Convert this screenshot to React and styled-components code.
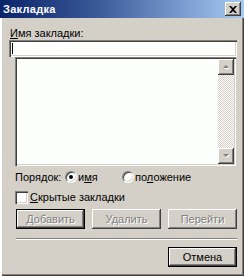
import React from "react";
import styled, { createGlobalStyle, css } from "styled-components";

const Global = createGlobalStyle`
  html, body { margin: 0; padding: 0; background: #d4d0c8; }
  body { font-family: "Liberation Sans", Arial, sans-serif; font-size: 11px; }
  * { box-sizing: border-box; }
`;

const Window = styled.div`
  width: 244px;
  height: 276px;
  display: flex;
  flex-direction: column;
  background: #d4d0c8;
  color: #000;
`;

const TitleBar = styled.div`
  height: 18px;
  flex: none;
  display: flex;
  align-items: center;
  justify-content: space-between;
  padding: 0 3px 0 3px;
  background: linear-gradient(90deg, #0a246a 0%, #3a5a98 40%, #7b9cd0 75%, #a6caf0 100%);
`;

const Title = styled.span`
  color: #fff;
  font-weight: bold;
  font-size: 11px;
  letter-spacing: 0.3px;
`;

const CloseBtn = styled.div`
  width: 16px;
  height: 14px;
  background: #d4d0c8;
  display: flex;
  align-items: center;
  justify-content: center;
  box-shadow: inset -1px -1px #404040, inset 1px 1px #fff, inset -2px -2px #808080;
`;

const Body = styled.div`
  flex: 1;
  display: flex;
  flex-direction: column;
  padding: 8px 7px 0 9px;
  box-shadow: inset 2px 0 #fff, inset -1px -1px #404040, inset -2px -2px #808080;
`;

const Label = styled.div`
  line-height: 14px;
  height: 14px;
  padding-left: ${(p) => p.$indent || 0}px;
`;

const U = styled.span`
  text-decoration: underline;
`;

const sunken = css`
  background: #fdfffc;
  box-shadow: inset 1px 1px #808080, inset 2px 2px #404040, inset -1px -1px #fff, inset -2px -2px #d4d0c8;
`;

const TextInput = styled.div`
  ${sunken};
  height: 17px;
  position: relative;
  &::after {
    content: "";
    position: absolute;
    left: 3px;
    top: 3px;
    width: 1px;
    height: 11px;
    background: #000;
  }
`;

const ListBox = styled.div`
  ${sunken};
  height: 109px;
  margin: 0 1px 0 6px;
  display: flex;
  justify-content: flex-end;
  padding: 2px;
`;

const ScrollBar = styled.div`
  width: 16px;
  display: flex;
  flex-direction: column;
  justify-content: space-between;
  background-color: #fff;
  background-image: conic-gradient(#d4d0c8 25%, #fff 0 50%, #d4d0c8 0 75%, #fff 0);
  background-size: 2px 2px;
`;

const raised = css`
  background: #d4d0c8;
  box-shadow: inset -1px -1px #404040, inset 1px 1px #fff, inset -2px -2px #808080, inset 2px 2px #d4d0c8;
`;

const ScrollBtn = styled.div`
  ${raised};
  width: 16px;
  height: 16px;
  display: flex;
  align-items: center;
  justify-content: center;
`;

const Row = styled.div`
  display: flex;
  align-items: center;
  height: 14px;
  margin-top: ${(p) => p.$mt || 0}px;
  margin-left: ${(p) => p.$ml || 0}px;
`;

const FieldLabel = styled.span`
  width: ${(p) => p.$w}px;
  flex: none;
`;

const Option = styled.label`
  display: flex;
  align-items: center;
  gap: 1px;
  width: ${(p) => p.$w || "auto"}px;
  flex: none;
`;

const Radio = styled.span`
  width: 12px;
  height: 12px;
  border-radius: 50%;
  flex: none;
  background: #fff;
  border: 1px solid;
  border-color: #808080 #fff #fff #808080;
  display: flex;
  align-items: center;
  justify-content: center;
  box-shadow: inset 1px 1px #404040, inset -1px -1px #d4d0c8;
  &::after {
    content: "";
    width: 4px;
    height: 4px;
    border-radius: 50%;
    background: ${(p) => (p.$checked ? "#000" : "transparent")};
  }
`;

const Check = styled.span`
  width: 13px;
  height: 13px;
  flex: none;
  margin-right: 2px;
  background: #fff;
  box-shadow: inset 1px 1px #808080, inset 2px 2px #404040, inset -1px -1px #fff, inset -2px -2px #d4d0c8;
`;

const ButtonRow = styled.div`
  display: flex;
  gap: 7px;
  margin: ${(p) => p.$mt}px 0 0 ${(p) => p.$ml}px;
  justify-content: ${(p) => p.$justify || "flex-start"};
`;

const Button = styled.div`
  width: 69px;
  height: 20px;
  display: flex;
  align-items: center;
  justify-content: center;
  background: #d4d0c8;
  color: ${(p) => (p.$disabled ? "#808080" : "#000")};
  text-shadow: ${(p) => (p.$disabled ? "1px 1px #fff" : "none")};
  box-shadow: ${(p) =>
    p.$default
      ? "inset 0 0 0 1px #000, inset -2px -2px #404040, inset 2px 2px #fff, inset -3px -3px #808080"
      : "inset -1px -1px #404040, inset 1px 1px #fff, inset -2px -2px #808080"};
`;

const Separator = styled.div`
  height: 2px;
  margin: 9px 0 0 7px;
  border-top: 1px solid #808080;
  border-bottom: 1px solid #fff;
`;

const UpArrow = () => (
  <svg width="7" height="4" viewBox="0 0 7 4">
    <path d="M1 4h6L4 1z" fill="#fff" />
    <path d="M0 3h6L3 0z" fill="#808080" />
  </svg>
);

const DownArrow = () => (
  <svg width="7" height="4" viewBox="0 0 7 4">
    <path d="M1 1h6L4 4z" fill="#fff" />
    <path d="M0 0h6L3 3z" fill="#808080" />
  </svg>
);

export default function App() {
  return (
    <>
      <Global />
      <Window>
        <TitleBar>
          <Title>Закладка</Title>
          <CloseBtn>
            <svg width="8" height="7" viewBox="0 0 8 7">
              <path d="M0 0h2l2 2 2-2h2L5 3.5 8 7H6L4 5 2 7H0l3-3.5z" fill="#000" />
            </svg>
          </CloseBtn>
        </TitleBar>
        <Body>
          <Label $indent={1}>
            <U>И</U>мя закладки:
          </Label>
          <TextInput />
          <ListBox>
            <ScrollBar>
              <ScrollBtn>
                <UpArrow />
              </ScrollBtn>
              <ScrollBtn>
                <DownArrow />
              </ScrollBtn>
            </ScrollBar>
          </ListBox>
          <Row $mt={4} $ml={6}>
            <FieldLabel $w={50}>Порядок:</FieldLabel>
            <Option $w={57}>
              <Radio $checked />
              <span>
                и<U>м</U>я
              </span>
            </Option>
            <Option>
              <Radio />
              <span>
                по<U>л</U>ожение
              </span>
            </Option>
          </Row>
          <Row $mt={6} $ml={6}>
            <Check />
            <span>
              <U>С</U>крытые закладки
            </span>
          </Row>
          <ButtonRow $mt={5} $ml={7}>
            <Button $disabled $default>
              Добавить
            </Button>
            <Button $disabled>Удалить</Button>
            <Button $disabled>Перейти</Button>
          </ButtonRow>
          <Separator />
          <ButtonRow $mt={7} $ml={7} $justify="flex-end">
            <Button $default>Отмена</Button>
          </ButtonRow>
        </Body>
      </Window>
    </>
  );
}
